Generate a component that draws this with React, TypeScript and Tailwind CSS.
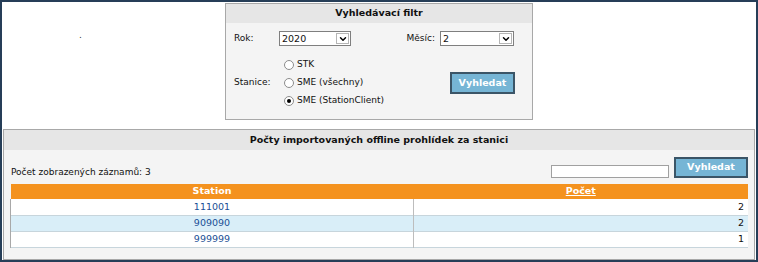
import { ChevronDown } from 'lucide-react';

const ROWS = [
  { station: '111001', count: 2 },
  { station: '909090', count: 2 },
  { station: '999999', count: 1 },
];

function Select({ value, className }: { value: string; className: string }) {
  return (
    <div className={`flex h-[15px] items-stretch border border-[#7f7f7f] bg-white ${className}`}>
      <span className="flex-1 pl-[2px] text-[9.5px] leading-[13px]">{value}</span>
      <span className="m-[1px] flex w-[13px] items-center justify-center border border-[#b5b5b5] bg-white">
        <ChevronDown className="h-[10px] w-[10px] text-black" strokeWidth={3.5} />
      </span>
    </div>
  );
}

function Radio({ label, checked }: { label: string; checked?: boolean }) {
  return (
    <label className="flex h-[18px] items-center gap-[3px]">
      <span className="flex h-[10px] w-[10px] items-center justify-center rounded-full border border-[#8c8c8c] bg-white">
        {checked && <span className="h-[4px] w-[4px] rounded-full bg-black" />}
      </span>
      {label}
    </label>
  );
}

function SearchButton({ className }: { className: string }) {
  return (
    <button className={`border-2 border-[#3b5567] bg-[#76b5d5] text-[9.5px] font-bold text-white ${className}`}>
      Vyhledat
    </button>
  );
}

export default function App() {
  return (
    <div className="h-[262px] w-[758px] overflow-hidden border-2 border-[#263e58] bg-white font-['DejaVu_Sans',Verdana,sans-serif] text-[9px] text-[#111]">
      {/* Filtr */}
      <div className="grid grid-cols-[1fr_auto_1fr] pt-[1px]">
        <div className="pl-[77px] pt-[26px] text-[#333]">.</div>
        <div className="w-[308px] border border-[#a8a8a8] bg-[#f4f4f4]">
          <div className="flex h-[19px] items-center justify-center bg-[#e6e6e6] text-[9.5px] font-bold">
            Vyhledávací filtr
          </div>
          <div className="flex items-center pl-[8px] pt-[8px]">
            <span className="w-[45px]">Rok:</span>
            <Select value="2020" className="w-[72px]" />
            <span className="ml-auto mr-[5px]">Měsíc:</span>
            <Select value="2" className="mr-[18px] w-[74px]" />
          </div>
          <div className="flex items-center pb-[9px] pl-[8px] pt-[10px]">
            <span className="w-[50px]">Stanice:</span>
            <div className="flex flex-col">
              <Radio label="STK" />
              <Radio label="SME (všechny)" />
              <Radio label="SME (StationClient)" checked />
            </div>
            <SearchButton className="ml-auto mr-[17px] h-[22px] w-[65px]" />
          </div>
        </div>
        <div />
      </div>

      {/* Tabulka */}
      <div className="mx-[1px] mt-[9px] border border-[#a8a8a8] bg-[#f4f4f4]">
        <div className="flex h-[20px] items-center justify-center bg-[#e6e6e6] text-[9.5px] font-bold">
          Počty importovaných offline prohlídek za stanici
        </div>
        <div className="px-[6px] pb-[11px]">
          <div className="flex items-end pt-[7px]">
            <span className="pl-[1px] leading-[12px]">Počet zobrazených záznamů: 3</span>
            <input className="ml-auto h-[13px] w-[118px] border border-[#a0a0a0] bg-white" />
            <SearchButton className="ml-[5px] h-[21px] w-[74px]" />
          </div>
          <table className="mt-[6px] w-full border-collapse">
            <thead>
              <tr className="h-[15px] bg-[#f4921e] text-[9.5px] text-white">
                <th className="w-[403px] font-bold">Station</th>
                <th className="font-bold underline">Počet</th>
              </tr>
            </thead>
            <tbody>
              {ROWS.map((r, i) => (
                <tr
                  key={r.station}
                  className={`h-[16px] border-b border-[#c7d5dc] text-[9.5px] ${i === 1 ? 'bg-[#d9eef8]' : 'bg-white'}`}
                >
                  <td className="border-l border-[#a8a8a8] text-center">
                    <a className="text-[#1a4f96]">{r.station}</a>
                  </td>
                  <td className="border-l border-[#bdbdbd] pr-[4px] text-right">{r.count}</td>
                </tr>
              ))}
            </tbody>
          </table>
        </div>
      </div>
    </div>
  );
}
